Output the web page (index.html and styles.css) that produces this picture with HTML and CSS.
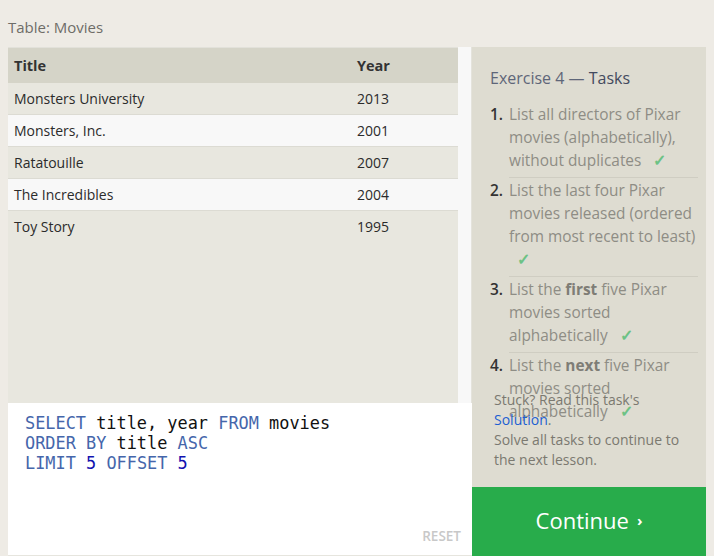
FILE: index.html
```html
<!DOCTYPE html>
<html>
<head>
<meta charset="utf-8">
<link rel="stylesheet" href="styles.css">
</head>
<body>
<div class="page">
  <div class="caption">Table: Movies</div>
  <div class="main">
    <div class="left">
      <div class="table-area">
        <div class="table-wrap">
          <table class="results">
            <thead>
              <tr><th class="c-title">Title</th><th class="c-year">Year</th></tr>
            </thead>
            <tbody>
              <tr><td>Monsters University</td><td>2013</td></tr>
              <tr><td>Monsters, Inc.</td><td>2001</td></tr>
              <tr><td>Ratatouille</td><td>2007</td></tr>
              <tr><td>The Incredibles</td><td>2004</td></tr>
              <tr><td>Toy Story</td><td>1995</td></tr>
            </tbody>
          </table>
        </div>
        <div class="scrollbar"></div>
      </div>
      <div class="editor">
        <pre class="code"><span class="kw">SELECT</span> title, year <span class="kw">FROM</span> movies
<span class="kw">ORDER BY</span> title <span class="kw">ASC</span>
<span class="kw">LIMIT</span> <span class="num">5</span> <span class="kw">OFFSET</span> <span class="num">5</span></pre>
        <div class="reset">RESET</div>
      </div>
    </div>
    <div class="right">
      <div class="tasks">
        <h2 class="tasks-title">Exercise 4 — <span class="strong">Tasks</span></h2>
        <ol class="task-list">
          <li><span class="n">1.</span><span class="t">List all directors of Pixar movies (alphabetically), without duplicates <span class="check">✓</span></span></li>
          <li><span class="n">2.</span><span class="t">List the last four Pixar movies released (ordered from most recent to least) <span class="check">✓</span></span></li>
          <li><span class="n">3.</span><span class="t">List the <b>first</b> five Pixar movies sorted alphabetically <span class="check">✓</span></span></li>
          <li><span class="n">4.</span><span class="t">List the <b>next</b> five Pixar movies sorted alphabetically <span class="check">✓</span></span></li>
        </ol>
        <div class="stuck">
          <p>Stuck? Read this task's <a class="link">Solution</a>.</p>
          <p>Solve all tasks to continue to the next lesson.</p>
        </div>
      </div>
      <div class="continue">Continue <span class="arrow">›</span></div>
    </div>
  </div>
</div>
</body>
</html>
```

FILE: styles.css
```css
html, body {
  margin: 0;
  padding: 0;
  background: #eeebe5;
  width: 714px;
  height: 556px;
  overflow: hidden;
}
.page {
  padding: 0 8px;
  font-family: "Open Sans", sans-serif;
}
.caption {
  height: 47px;
  line-height: 55px;
  font-size: 15px;
  color: #6e6d68;
  box-sizing: border-box;
}
.main {
  display: flex;
  height: 509px;
}
.left {
  width: 464px;
  display: flex;
  flex-direction: column;
}
.table-area {
  height: 356px;
  display: flex;
}
.table-wrap {
  width: 450px;
  background: #e8e7df;
  border-top: 1px solid #e2e1da;
}
.scrollbar {
  width: 13px;
  background: #f8f8f8;
  border-right: 1px solid #e4e3dc;
}
.results {
  width: 100%;
  border-collapse: collapse;
  font-size: 14px;
  color: #2b2b2b;
}
.results th {
  background: #d5d4c8;
  height: 35px;
  text-align: left;
  font-weight: 700;
  padding: 0 6px;
  font-size: 14.5px;
  color: #333;
}
.results th.c-year, .results td:nth-child(2) {
  width: 95px;
}
.results td {
  height: 31px;
  padding: 0 6px;
  border-bottom: 1px solid #dcdbd3;
}
.results tbody tr:nth-child(even) td {
  background: #f8f8f8;
}
.results tbody tr:last-child td {
  border-bottom: none;
}
.editor {
  flex: 1;
  background: #fff;
  border-bottom: 1px solid #e6e5de;
  position: relative;
}
.code {
  margin: 0;
  padding: 10px 0 0 17px;
  font-family: "DejaVu Sans Mono", monospace;
  font-size: 16.9px;
  line-height: 20px;
  color: #111;
}
.kw { color: #4566ab; }
.num { color: #1212b0; }
.reset {
  position: absolute;
  right: 11px;
  bottom: 10px;
  font-size: 13.5px;
  font-weight: 600;
  color: #c8c8c8;
}
.right {
  width: 234px;
  display: flex;
  flex-direction: column;
  background: #dedcd1;
}
.tasks {
  height: 440px;
  position: relative;
  overflow: hidden;
  padding: 0 8px 0 18px;
}
.tasks-title {
  margin: 20px 0 13px;
  font-size: 16px;
  font-weight: 400;
  color: #5e6679;
  line-height: 22px;
}
.tasks-title .strong { color: #434a5e; font-weight: 400; }
.task-list {
  list-style: none;
  margin: 0;
  padding: 0;
}
.task-list li {
  display: flex;
  font-size: 15.4px;
  line-height: 22.7px;
  color: #8e8d85;
  padding: 2px 0 4px;
}
.task-list .n {
  width: 19px;
  flex: none;
  color: #333;
  font-weight: 600;
}
.task-list .t {
  flex: 1;
  border-bottom: 1px solid #cfcdc2;
  padding-bottom: 4px;
  margin-bottom: -4px;
}
.task-list li:last-child .t { border-bottom: none; }
.task-list b { color: #7e7d76; font-weight: 700; }
.check {
  color: #6dc285;
  margin-left: 8px;
  font-size: 16px;
  font-weight: 700;
}
.stuck {
  position: absolute;
  left: 22px;
  top: 343px;
  width: 192px;
  font-size: 14px;
  line-height: 20px;
  color: #7b7970;
}
.stuck p { margin: 0; }
.link { color: #1d5fd1; }
.continue {
  flex: 1;
  background: #28ac4b;
  color: #fff;
  font-size: 22px;
  display: flex;
  align-items: center;
  justify-content: center;
  padding-bottom: 4px;
}
.continue .arrow {
  font-size: 15px;
  margin-left: 8px;
  font-weight: 700;
}
```
